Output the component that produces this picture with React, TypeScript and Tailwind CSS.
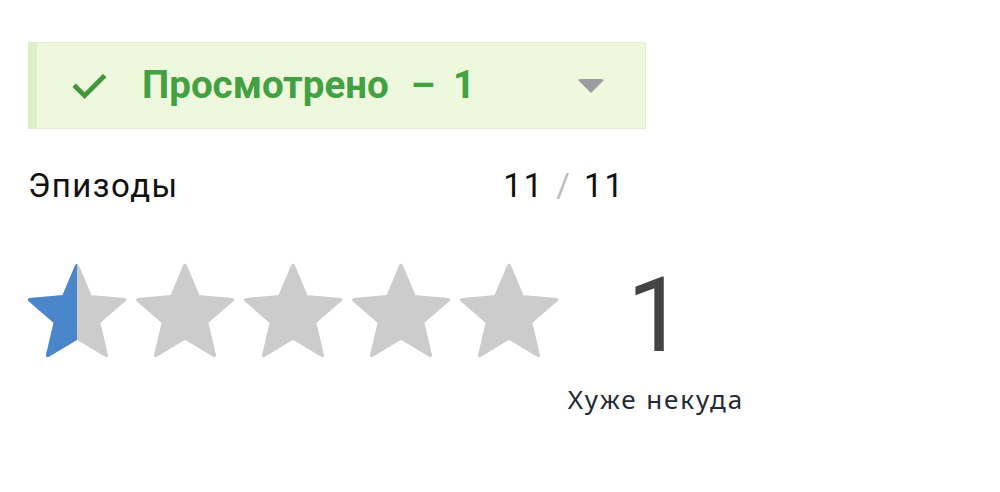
import React from "react";

const STAR = "M12 17.27L18.18 21l-1.64-7.03L22 9.24l-7.19-.61L12 2 9.19 8.63 2 9.24l5.46 4.73L5.82 21z";

function Star({ half = false, id }: { half?: boolean; id: string }) {
  return (
    <svg viewBox="1.6 1.6 20.8 19.8" className="w-[98px] h-[95px] shrink-0">
      <defs>
        <clipPath id={id}>
          <rect x="0" y="0" width="12" height="24" />
        </clipPath>
      </defs>
      <path d={STAR} fill="#cccccc" stroke="#cccccc" strokeWidth="0.8" strokeLinejoin="round" />
      {half && (
        <path
          d={STAR}
          fill="#4a86c9"
          stroke="#4a86c9"
          strokeWidth="0.8"
          strokeLinejoin="round"
          clipPath={`url(#${id})`}
        />
      )}
    </svg>
  );
}

export default function App() {
  return (
    <div className="min-h-screen bg-white pl-[28px] pt-[42px]" style={{ fontFamily: "Roboto, 'Noto Sans', sans-serif" }}>
      {/* status dropdown */}
      <div className="w-[618px] h-[87px] flex items-center bg-[#eef8dd] border border-[#e3f0cf] border-l-[9px] border-l-[#ddefc6]">
        <svg viewBox="0 0 24 24" className="w-[42px] h-[42px] ml-[31px] mt-[1px]" fill="none">
          <path d="M4.5 12.5l5 5L20 7" stroke="#43973f" strokeWidth="2.8" strokeLinecap="square" />
        </svg>
        <span className="ml-[32px] text-[38.5px] font-bold text-[#43a043] leading-none">Просмотрено</span>
        <span className="ml-[22px] text-[38.5px] font-bold text-[#43a043] leading-none">–</span>
        <span className="ml-[18px] text-[38.5px] font-bold text-[#43a043] leading-none">1</span>
        <div className="ml-auto mr-[40px] w-0 h-0 border-l-[14px] border-r-[14px] border-t-[14px] border-l-transparent border-r-transparent border-t-[#9a9ca0] rounded-sm" />
      </div>

      {/* episodes */}
      <div className="w-[597px] mt-[40px] flex items-center justify-between text-[33px] leading-none text-[#111]">
        <span className="tracking-[0.045em]">Эпизоды</span>
        <span className="tracking-[0.06em]">
          11<span className="text-[#bdbdbd] mx-[12px]">/</span>11
        </span>
      </div>

      {/* rating */}
      <div className="mt-[61px] flex items-start">
        <div className="flex gap-[10px]">
          <Star half id="s1" />
          <Star id="s2" />
          <Star id="s3" />
          <Star id="s4" />
          <Star id="s5" />
        </div>
        <div className="w-[196px] mt-[1px] flex flex-col items-center">
          <span className="text-[104px] leading-none text-[#444]">1</span>
          <span className="mt-[18px] text-[26px] leading-none text-[#1f2b36] tracking-[0.075em]" style={{ fontFamily: "'Noto Sans', sans-serif" }}>
            Хуже некуда
          </span>
        </div>
      </div>
    </div>
  );
}
